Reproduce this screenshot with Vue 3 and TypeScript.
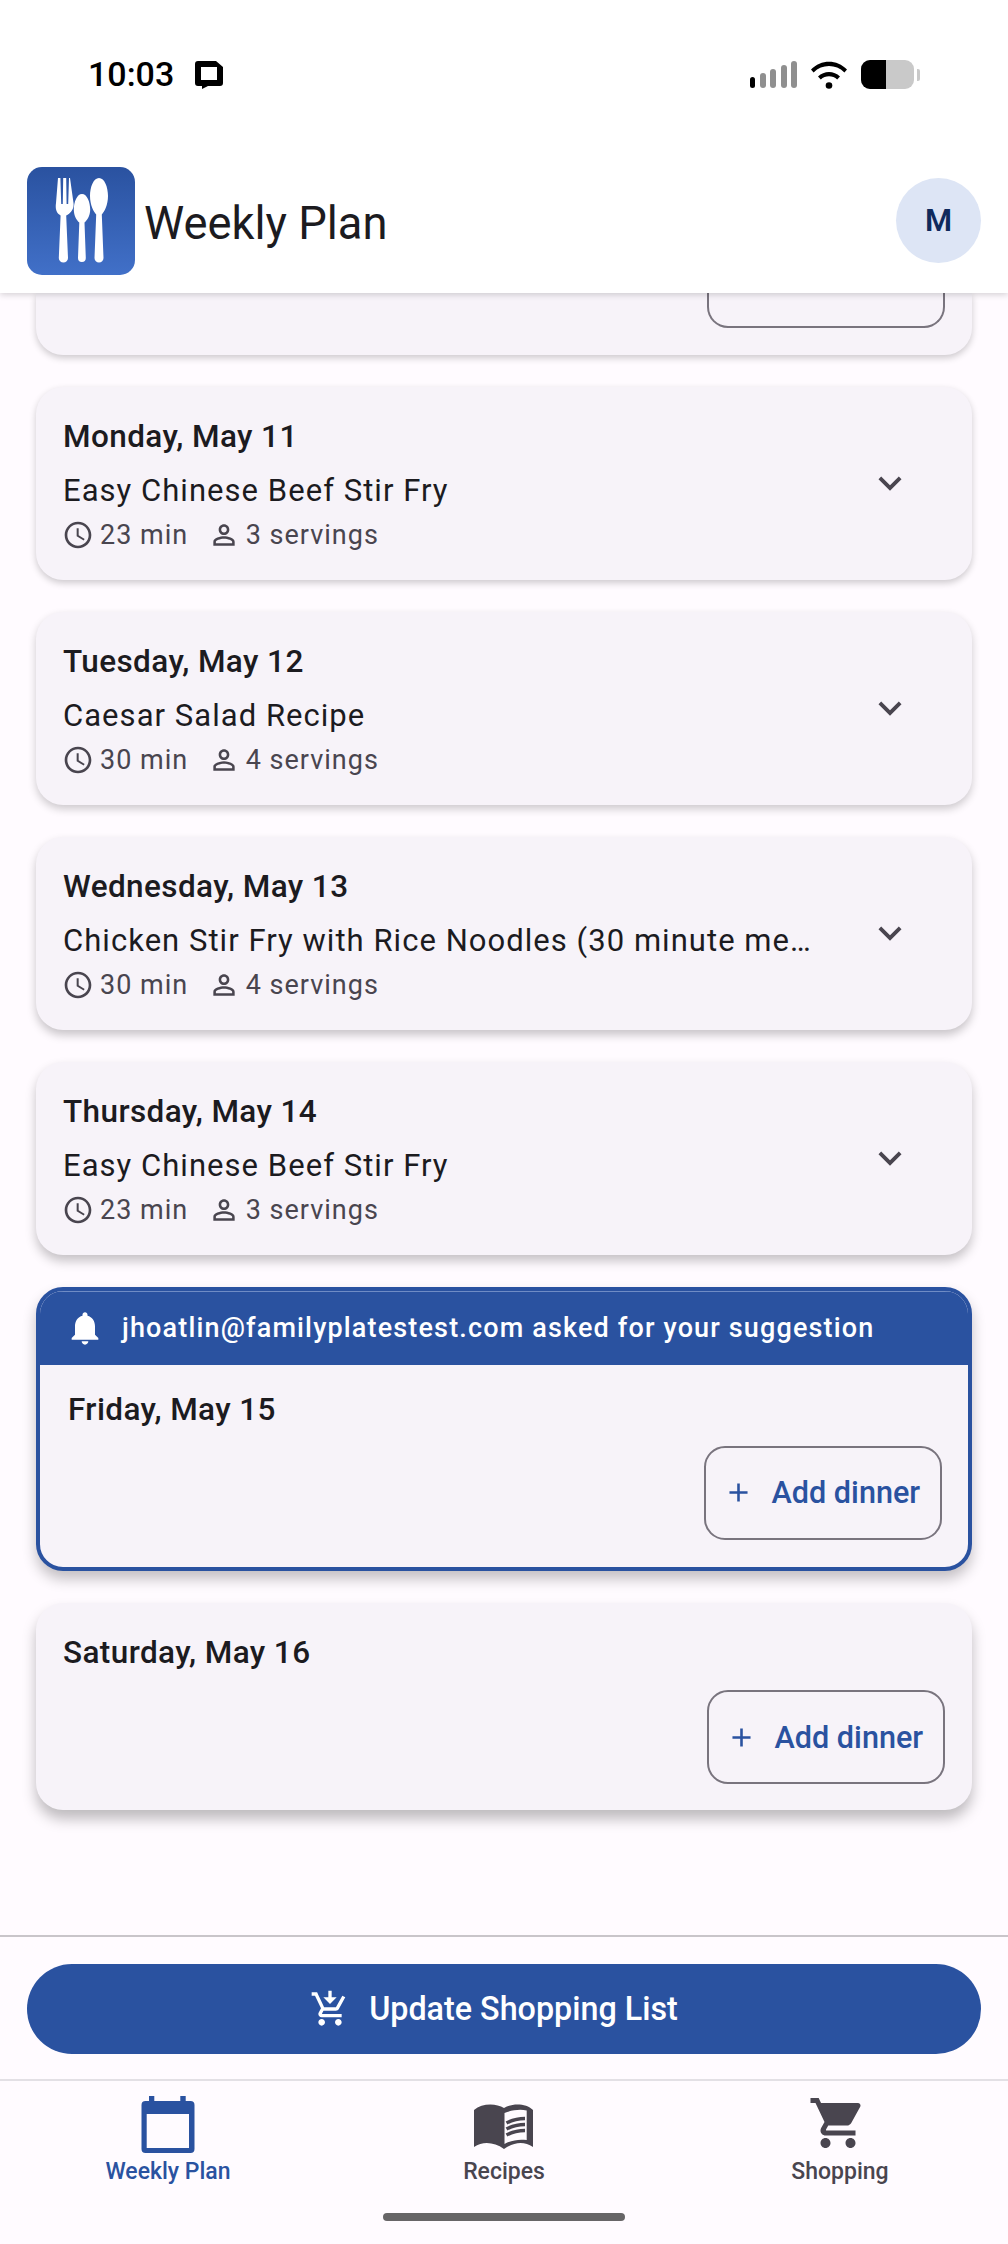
<script setup lang="ts">
interface Planned {
  id: number
  date: string
  recipe: string
  time: string
  servings: string
  depth: number
}

const planned: Planned[] = [
  { id: 1, date: 'Monday, May 11', recipe: 'Easy Chinese Beef Stir Fry', time: '23 min', servings: '3 servings', depth: 1 },
  { id: 2, date: 'Tuesday, May 12', recipe: 'Caesar Salad Recipe', time: '30 min', servings: '4 servings', depth: 2 },
  { id: 3, date: 'Wednesday, May 13', recipe: 'Chicken Stir Fry with Rice Noodles (30 minute meal)', time: '30 min', servings: '4 servings', depth: 3 },
  { id: 4, date: 'Thursday, May 14', recipe: 'Easy Chinese Beef Stir Fry', time: '23 min', servings: '3 servings', depth: 4 },
]
const signalBars = [1, 2, 3, 4, 5]
</script>

<template>
  <div class="page">
    <header class="top">
      <div class="status">
        <div class="status-left">
          <span class="clock">10:03</span>
          <svg class="msg" viewBox="0 0 28 28" aria-hidden="true">
            <path d="M3 0h18l7 6v16a3 3 0 0 1-3 3H13l-6 3v-3H3a3 3 0 0 1-3-3V3a3 3 0 0 1 3-3zM6 6v13h16V6z" fill="#000" fill-rule="evenodd" />
          </svg>
        </div>
        <div class="status-right">
          <div class="signal">
            <span v-for="b in signalBars" :key="b" class="bar" :class="`bar-${b}`"></span>
          </div>
          <svg class="wifi" viewBox="0 0 36 28" aria-hidden="true">
            <path d="M0 8.500C10-2 26-2 36 8.500l-2.600 2.900C24.800 3 11.200 3 2.600 11.400z" fill="#000" />
            <path d="M7 15.500c6-6 16-6 22 0l-2.800 3c-4.500-4.200-11.900-4.200-16.400 0z" fill="#000" />
            <circle cx="18" cy="24.500" r="3.300" fill="#000" />
          </svg>
          <div class="battery">
            <div class="batt-body"><div class="batt-level"></div></div>
            <div class="batt-nub"></div>
          </div>
        </div>
      </div>
      <div class="appbar">
        <div class="logo">
          <svg viewBox="0 0 108 108" width="108" height="108" aria-hidden="true">
            <g fill="#fff">
              <path d="M31 11h2.400l.8 26h1.600l.4-26h3l.4 26h1.600l.8-26H43l3.500 25c.8 6-2.800 10-7.300 12.500l1.800 42.500a4.600 4.600 0 0 1-9.200 0l1.800-42.500C28.800 46 28.300 41 29 36z" />
              <path d="M55 27c5 0 8.200 8 8.200 15.500 0 6.500-3.300 11-5.700 13l1.300 35.500a3.900 3.900 0 0 1-7.800 0l1.300-35.500c-2.400-2-5.500-6.500-5.500-13C46.800 35 50 27 55 27z" />
              <path d="M72 11c5.500 0 9 9 9 18 0 9-3.800 16-6.200 18.500l1.700 43.500a4.500 4.500 0 0 1-9 0l1.700-43.500C66.800 45 63 38 63 29c0-9 3.500-18 9-18z" />
            </g>
          </svg>
        </div>
        <h1 class="title">Weekly Plan</h1>
        <div class="avatar">M</div>
      </div>
    </header>

    <main class="content">
      <div class="stub-card depth-1">
        <div class="stub-btn"></div>
      </div>

      <article v-for="p in planned" :key="p.id" class="card planned" :class="`depth-${p.depth}`">
        <div class="planned-text">
          <div class="day">{{ p.date }}</div>
          <div class="recipe">{{ p.recipe }}</div>
          <div class="meta">
            <svg class="meta-clock" viewBox="0 0 24 24" aria-hidden="true">
              <path d="M11.990 2C6.470 2 2 6.480 2 12s4.470 10 9.990 10C17.520 22 22 17.520 22 12S17.520 2 11.990 2zM12 20c-4.420 0-8-3.580-8-8s3.580-8 8-8 8 3.580 8 8-3.580 8-8 8zm.5-13H11v6l5.250 3.150.75-1.230-4.500-2.670z" />
            </svg>
            <span class="meta-time">{{ p.time }}</span>
            <svg class="meta-person" viewBox="0 0 24 24" aria-hidden="true">
              <path d="M12 5.900c1.160 0 2.100.94 2.100 2.100s-.94 2.100-2.100 2.100S9.900 9.160 9.900 8s.94-2.100 2.100-2.100m0 9c2.970 0 6.100 1.460 6.100 2.100v1.100H5.900V17c0-.64 3.130-2.100 6.100-2.100M12 4C9.790 4 8 5.790 8 8s1.790 4 4 4 4-1.790 4-4-1.790-4-4-4zm0 9c-2.670 0-8 1.340-8 4v3h16v-3c0-2.660-5.330-4-8-4z" />
            </svg>
            <span>{{ p.servings }}</span>
          </div>
        </div>
        <svg class="chevron" viewBox="0 0 24 24" aria-hidden="true">
          <path d="M16.590 8.590L12 13.170 7.410 8.590 6 10l6 6 6-6z" />
        </svg>
      </article>

      <article class="request">
        <div class="request-head">
          <svg class="bell" viewBox="0 0 24 24" aria-hidden="true">
            <path d="M12 22c1.100 0 2-.9 2-2h-4c0 1.100.89 2 2 2zm6-6v-5c0-3.070-1.640-5.640-4.500-6.320V4c0-.83-.67-1.500-1.500-1.500s-1.500.67-1.500 1.500v.68C7.630 5.360 6 7.920 6 11v5l-2 2v1h16v-1l-2-2z" />
          </svg>
          <span class="request-text">jhoatlin@familyplatestest.com asked for your suggestion</span>
        </div>
        <div class="request-body">
          <div class="day">Friday, May 15</div>
          <div class="add-row">
            <button class="add-btn" type="button">
              <svg class="plus" viewBox="0 0 24 24" aria-hidden="true"><path d="M19 13h-6v6h-2v-6H5v-2h6V5h2v6h6z" /></svg>
              <span>Add dinner</span>
            </button>
          </div>
        </div>
      </article>

      <article class="card empty depth-6">
        <div class="day">Saturday, May 16</div>
        <div class="add-row">
          <button class="add-btn" type="button">
            <svg class="plus" viewBox="0 0 24 24" aria-hidden="true"><path d="M19 13h-6v6h-2v-6H5v-2h6V5h2v6h6z" /></svg>
            <span>Add dinner</span>
          </button>
        </div>
      </article>
    </main>

    <div class="action">
      <button class="update" type="button">
        <svg class="update-icon" viewBox="0 0 24 24" aria-hidden="true">
          <path d="M13 1h-2v4H8l4 4 4-4h-3V1zM7 18c-1.100 0-1.990.9-1.990 2S5.900 22 7 22s2-.9 2-2-.9-2-2-2zm10 0c-1.100 0-1.990.9-1.990 2s.89 2 1.990 2 2-.9 2-2-.9-2-2-2zm-9.830-3.250l.03-.12.9-1.630h7.450c.75 0 1.410-.41 1.750-1.030l3.860-7.010L19.420 4h-.01l-1.100 2-2.760 5H8.530l-.13-.27L6.160 6l-.95-2-.94-2H1v2h2l3.600 7.590-1.350 2.450c-.16.28-.25.61-.25.96 0 1.100.9 2 2 2h12v-2H7.420c-.13 0-.25-.11-.25-.25z" />
        </svg>
        <span>Update Shopping List</span>
      </button>
    </div>

    <nav class="tabs">
      <div class="tab active">
        <svg class="tab-icon" viewBox="0 0 60 60" aria-hidden="true">
          <path d="M7.500 8H11V3h5.300v5h26V3h5.400v5h4.800a4 4 0 0 1 4 4v44a4 4 0 0 1-4 4h-45a4 4 0 0 1-4-4V12a4 4 0 0 1 4-4zM8.700 21v34H51V21z" fill-rule="evenodd" />
        </svg>
        <span class="tab-label">Weekly Plan</span>
      </div>
      <div class="tab">
        <svg class="tab-icon" viewBox="0 0 60 60" aria-hidden="true">
          <path d="M0 17C8 10 22 10 30 15 38 10 52 10 59 17V54C50 48 40 49 30 56 20 49 9 48 0 54zM30.500 20V51C38 47 45 46 52.700 47V17.500C46 16 38 17 30.500 20z" fill-rule="evenodd" />
          <path class="book-line" d="M32.500 30C38 27 45 25.500 51 25.500M32.500 36C38 33 45 31.500 51 31.500M32.500 42C38 39 45 37.500 51 37.500" />
        </svg>
        <span class="tab-label">Recipes</span>
      </div>
      <div class="tab">
        <svg class="tab-icon cart" viewBox="0 0 24 24" aria-hidden="true">
          <path d="M7 18c-1.100 0-1.990.9-1.990 2S5.900 22 7 22s2-.9 2-2-.9-2-2-2zM1 2v2h2l3.600 7.590-1.350 2.450c-.16.28-.25.61-.25.96 0 1.100.9 2 2 2h12v-2H7.420c-.14 0-.25-.11-.25-.25l.03-.12.9-1.630h7.450c.75 0 1.410-.41 1.750-1.030l3.580-6.490c.08-.14.12-.31.12-.48 0-.55-.45-1-1-1H5.210l-.94-2H1zm16 16c-1.100 0-1.990.9-1.990 2s.89 2 1.990 2 2-.9 2-2-.9-2-2-2z" />
        </svg>
        <span class="tab-label">Shopping</span>
      </div>
      <div class="home-pill"></div>
    </nav>
  </div>
</template>

<style>
html, body { margin: 0; background: #fffbff; }
</style>

<style scoped>
.page {
  width: 1008px;
  height: 2244px;
  display: flex;
  flex-direction: column;
  overflow: hidden;
  background: #fffbff;
  font-family: Roboto, "Liberation Sans", sans-serif;
  color: #1c1b1f;
}
.top {
  height: 293px;
  flex: none;
  background: #fff;
  position: relative;
  z-index: 2;
  box-shadow: 0 2px 6px rgba(0, 0, 0, 0.16);
}
.status {
  height: 148px;
  padding: 60px 88px 0;
  box-sizing: border-box;
  display: flex;
  justify-content: space-between;
  align-items: flex-start;
}
.status-left { display: flex; align-items: center; gap: 21px; height: 29px; }
.clock { font-size: 34px; font-weight: 500; line-height: 29px; color: #000; }
.msg { width: 28px; height: 28px; }
.status-right { display: flex; align-items: center; gap: 14px; height: 29px; }
.signal { display: flex; align-items: flex-end; gap: 4.600px; height: 27px; }
.bar { width: 5.800px; border-radius: 3px; background: #8f8f8f; }
.bar-1 { height: 11px; background: #000; }
.bar-2 { height: 15px; }
.bar-3 { height: 19px; }
.bar-4 { height: 23px; }
.bar-5 { height: 27px; }
.wifi { width: 36px; height: 28px; }
.battery { display: flex; align-items: center; gap: 3px; }
.batt-body { width: 53px; height: 29px; border-radius: 9px; background: #c9c9c9; overflow: hidden; }
.batt-level { width: 25px; height: 100%; background: #000; }
.batt-nub { width: 3px; height: 12px; background: #c9c9c9; border-radius: 0 2px 2px 0; }

.appbar {
  display: flex;
  align-items: flex-start;
  padding: 19px 27px 0;
}
.logo {
  width: 108px;
  height: 108px;
  border-radius: 15px;
  background: linear-gradient(180deg, #2a52a0 0%, #4170c8 100%);
  flex: none;
}
.title {
  margin: 31px 0 0 9px;
  font-size: 45.300px;
  line-height: 52px;
  font-weight: 400;
  color: #1c1b1f;
}
.avatar {
  margin: 11px 0 0 auto;
  width: 85px;
  height: 85px;
  border-radius: 50%;
  background: #dde5f5;
  color: #0f2a5c;
  font-size: 31px;
  font-weight: 600;
  display: flex;
  align-items: center;
  justify-content: center;
}

.content {
  flex: 1 1 0;
  min-height: 0;
  overflow: hidden;
  padding: 0 36px;
  display: flex;
  flex-direction: column;
  gap: 32px;
}
.stub-card {
  flex: none;
  height: 62px;
  background: #f7f3f9;
  border-radius: 0 0 27px 27px;
  padding-right: 27px;
  display: flex;
  justify-content: flex-end;
  align-items: flex-start;
}
.stub-btn {
  width: 238px;
  height: 35px;
  box-sizing: border-box;
  border: 2px solid #79747e;
  border-top: 0;
  border-radius: 0 0 21px 21px;
}
.card {
  flex: none;
  background: #f7f3f9;
  border-radius: 27px;
  box-sizing: border-box;
}
.depth-1 { box-shadow: 0 3px 7px rgba(0, 0, 0, 0.2); }
.depth-2 { box-shadow: 0 4px 8px rgba(0, 0, 0, 0.2); }
.depth-3 { box-shadow: 0 5px 10px rgba(0, 0, 0, 0.22); }
.depth-4 { box-shadow: 0 6px 11px rgba(0, 0, 0, 0.23); }
.depth-6 { box-shadow: 0 9px 14px rgba(0, 0, 0, 0.26); }
.planned {
  height: 193px;
  padding: 28px 25px 0 27px;
  display: flex;
  align-items: flex-start;
}
.planned-text { width: 748px; flex: none; }
.day {
  font-size: 31.500px;
  line-height: 44px;
  font-weight: 500;
  letter-spacing: 0.4px;
  color: #1c1b1f;
}
.recipe {
  margin-top: 10px;
  font-size: 31px;
  line-height: 44px;
  letter-spacing: 1.040px;
  color: #1c1b1f;
  white-space: nowrap;
  overflow: hidden;
  text-overflow: ellipsis;
}
.meta {
  margin-top: 4px;
  height: 36px;
  display: flex;
  align-items: center;
  font-size: 27px;
  letter-spacing: 1px;
  color: #49454f;
}
.meta svg { fill: #49454f; flex: none; }
.meta-clock { width: 32px; height: 32px; margin: 0 6px 0 -1px; }
.meta-time { margin-right: 19.500px; }
.meta-person { width: 32px; height: 32px; margin-right: 6px; }
.chevron { width: 46px; height: 46px; fill: #49454f; margin: 45px 0 0 56px; flex: none; }

.request {
  flex: none;
  height: 284px;
  box-sizing: border-box;
  border: 4.500px solid #2a52a0;
  border-radius: 27px;
  background: #f7f3f9;
  box-shadow: 0 8px 14px rgba(0, 0, 0, 0.24);
  overflow: hidden;
}
.request-head {
  height: 73.500px;
  box-sizing: border-box;
  background: #2a52a0;
  border-top: 1px solid #6f8cc5;
  display: flex;
  align-items: center;
  padding-left: 25px;
  color: #fff;
}
.bell { width: 40px; height: 40px; fill: #fff; flex: none; margin-right: 17px; }
.request-text { font-size: 27px; font-weight: 500; letter-spacing: 1.150px; }
.request-body { padding: 23px 27px 26px 28px; }
.add-row { display: flex; justify-content: flex-end; }
.request-body .add-row { margin-top: 14px; }
.request-body .add-btn { margin-right: -1px; }
.empty { height: 207px; padding: 28px 27px 27px; }
.empty .add-row { margin-top: 15px; }
.add-btn {
  width: 238px;
  height: 94px;
  box-sizing: border-box;
  border: 2px solid #79747e;
  border-radius: 21px;
  background: transparent;
  color: #2a52a0;
  font-family: inherit;
  font-size: 30.600px;
  font-weight: 500;
  padding: 0 0 0 16.500px;
  display: flex;
  align-items: center;
}
.plus { width: 31px; height: 31px; fill: #2a52a0; margin-right: 18px; flex: none; }

.action {
  flex: none;
  height: 146px;
  box-sizing: border-box;
  border-top: 2px solid #c9c5ca;
  border-bottom: 2px solid #e3e0e5;
  padding: 27px;
}
.update {
  width: 100%;
  height: 90px;
  border: 0;
  border-radius: 45px;
  background: #2a52a0;
  color: #fff;
  font-family: inherit;
  font-size: 32.300px;
  font-weight: 500;
  display: flex;
  align-items: center;
  justify-content: center;
  gap: 19px;
  padding: 0 20px 0 0;
}
.update-icon { width: 40px; height: 40px; fill: #fff; flex: none; }

.tabs {
  flex: none;
  height: 163px;
  position: relative;
  display: grid;
  grid-template-columns: repeat(3, 1fr);
}
.tab {
  display: flex;
  flex-direction: column;
  align-items: center;
  padding-top: 12px;
  color: #49454f;
}
.tab-icon { width: 60px; height: 60px; fill: #49454f; }
.cart { margin-right: 4px; }
.book-line { fill: none; stroke: #49454f; stroke-width: 3.500; }
.tab-label { font-size: 23px; font-weight: 500; line-height: 32px; margin-top: 3px; }
.active { color: #2a52a0; }
.active .tab-icon { fill: #2a52a0; }
.home-pill {
  position: absolute;
  left: 383px;
  top: 132px;
  width: 242px;
  height: 8px;
  border-radius: 4px;
  background: #676567;
}
</style>
